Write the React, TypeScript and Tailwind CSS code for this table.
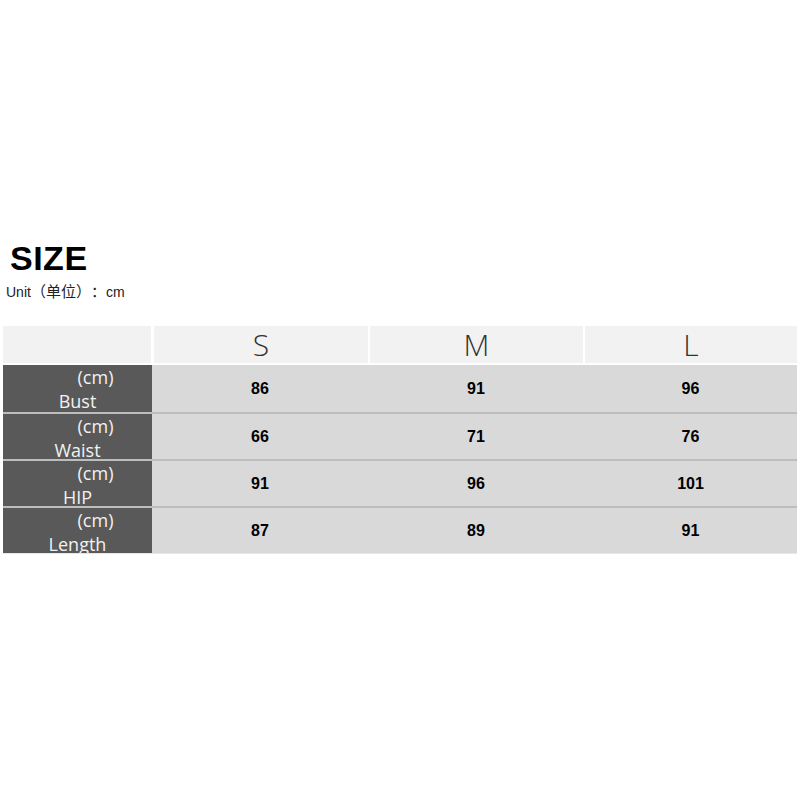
import React from 'react';

const SIZES = ['S', 'M', 'L'];

const ROWS: { label: string; values: string[] }[] = [
  { label: 'Bust', values: ['86', '91', '96'] },
  { label: 'Waist', values: ['66', '71', '76'] },
  { label: 'HIP', values: ['91', '96', '101'] },
  { label: 'Length', values: ['87', '89', '91'] },
];

export default function App() {
  return (
    <div className="w-[800px] h-[800px] bg-white font-['Liberation_Sans',Arial,sans-serif] text-black">
      <div className="pt-[240px] pl-[10px]">
        <h1 className="text-[34px] leading-[36px] font-bold tracking-[0.5px]">SIZE</h1>
      </div>
      <p className="pl-[6px] mt-[6px] text-[14px] leading-[18px] text-[#222] [text-spacing-trim:space-all]">
        Unit<span className="font-['Noto_Sans_CJK_SC',sans-serif] text-[15px] [text-spacing-trim:space-all]">（单位）：</span>cm
      </p>

      <div className="mt-[25px] ml-[3px] w-[794px]">
        {/* header */}
        <div className="flex h-[37px]">
          <div className="w-[148px] bg-[#f2f2f2]" />
          {SIZES.map((s, i) => (
            <div
              key={s}
              className={`${i === 0 ? 'w-[214px] ml-[3px]' : i === 1 ? 'w-[213px] ml-[2px]' : 'w-[212px] ml-[2px]'} bg-[#f2f2f2] flex items-center justify-center`}
            >
              <span className="font-['Open_Sans',sans-serif] font-light text-[30px] leading-none text-[#333]">{s}</span>
            </div>
          ))}
        </div>

        {/* rows */}
        <div className="mt-[2px]">
          {ROWS.map((row, i) => (
            <div key={row.label} className={`flex h-[47px] ${i > 0 ? 'border-t-2 border-[#bdbdbd]' : ''}`}>
              <div className="w-[149px] bg-[#595959] overflow-hidden flex flex-col items-center text-[#f2f2f2] font-['Open_Sans',sans-serif] text-[18px] leading-[24px]">
                <span className="pl-[36px]">(cm)</span>
                <span>{row.label}</span>
              </div>
              <div className="flex-1 bg-[#d9d9d9] grid grid-cols-[216px_216px_1fr]">
                {row.values.map((v, j) => (
                  <div key={j} className="flex items-center justify-center text-[16px] font-bold">
                    {v}
                  </div>
                ))}
              </div>
            </div>
          ))}
        </div>
      </div>
      <div className="ml-[3px] w-[794px] h-[1px] bg-[#e6e6e6]" />
    </div>
  );
}
